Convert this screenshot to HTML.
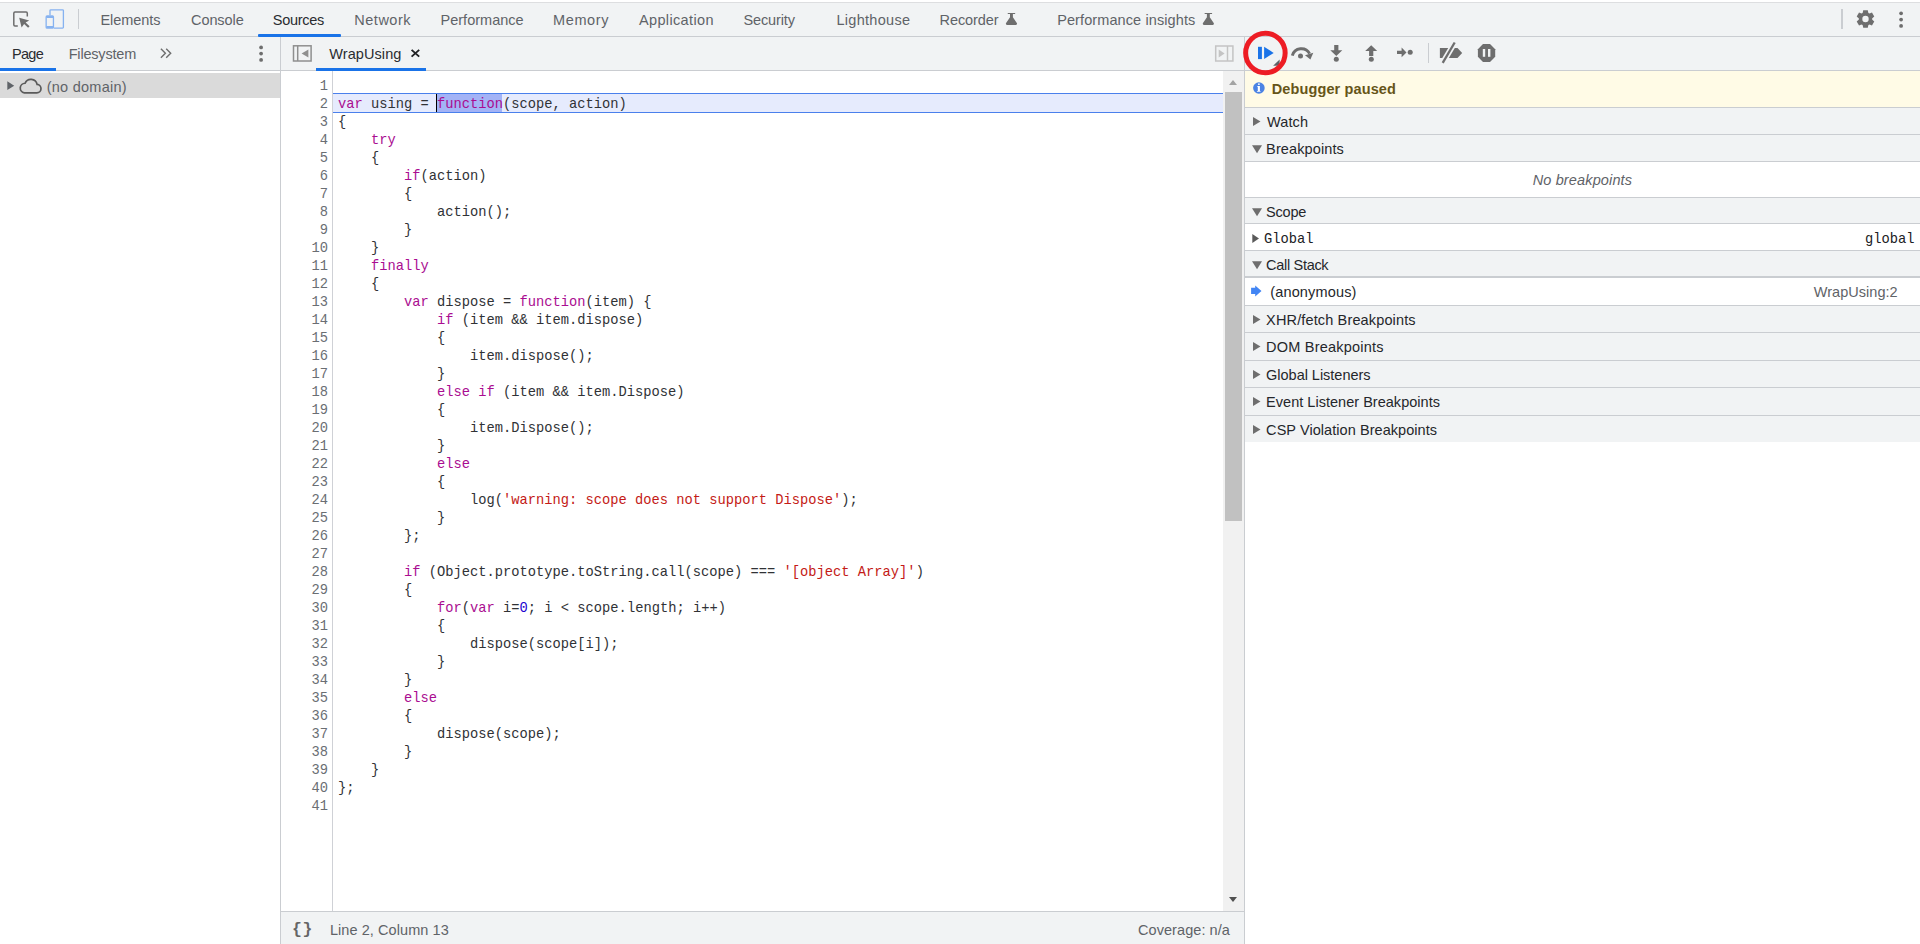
<!DOCTYPE html>
<html lang="en">
<head>
<meta charset="utf-8">
<title>DevTools - Sources</title>
<style>
*{box-sizing:border-box;margin:0;padding:0}
html,body{width:1920px;height:944px;overflow:hidden;background:#fff}
body{position:relative;font-family:"Liberation Sans",sans-serif;font-size:14.5px;color:#5f6368}
.abs{position:absolute}
svg{position:absolute;overflow:visible}
.t{position:absolute;white-space:nowrap;line-height:20px;height:20px;margin-top:1px}
.sel{color:#2a2c30}
.dk{color:#25272b}
.vline{position:absolute;width:1px;background:#cacdd1}
.ul{position:absolute;height:3px;background:#1a73e8}
.mono{font-family:"Liberation Mono",monospace;font-size:13.75px}
#code{position:absolute;left:338px;top:78px;font-family:"Liberation Mono",monospace;font-size:13.75px;line-height:18px;color:#303236;white-space:pre}
#nums{position:absolute;left:281px;top:78px;width:47px;text-align:right;font-family:"Liberation Mono",monospace;font-size:13.75px;line-height:18px;color:#6a6e73;white-space:pre}
.k{color:#aa0d91}.s{color:#c41a16}.n{color:#1c00cf}
.sec{position:absolute;left:1245px;width:675px;background:#f1f3f4;border-top:1px solid #cacdd1}
.row{position:absolute;left:1245px;width:675px;background:#fff;border-top:1px solid #cacdd1}
</style>
</head>
<body>
<div class="abs" style="left:0;top:2px;width:1920px;height:35px;background:#f1f3f4;border-top:1px solid #dddee0;border-bottom:1px solid #cacdd1"></div>
<div class="abs" style="left:0;top:37px;width:1920px;height:34px;background:#f1f3f4;border-bottom:1px solid #cacdd1"></div>
<span class="t" id="tb1" style="left:100.50px;top:9px;letter-spacing:-0.077px;">Elements</span>
<span class="t" id="tb2" style="left:191.00px;top:9px;letter-spacing:-0.075px;">Console</span>
<span class="t sel" id="tb3" style="left:272.80px;top:9px;letter-spacing:-0.300px;">Sources</span>
<span class="t" id="tb4" style="left:354.30px;top:9px;letter-spacing:0.510px;">Network</span>
<span class="t" id="tb5" style="left:440.50px;top:9px;letter-spacing:0.018px;">Performance</span>
<span class="t" id="tb6" style="left:553.00px;top:9px;letter-spacing:0.630px;">Memory</span>
<span class="t" id="tb7" style="left:639.00px;top:9px;letter-spacing:0.351px;">Application</span>
<span class="t" id="tb8" style="left:743.40px;top:9px;letter-spacing:-0.116px;">Security</span>
<span class="t" id="tb9" style="left:836.50px;top:9px;letter-spacing:0.280px;">Lighthouse</span>
<span class="t" id="tb10" style="left:939.60px;top:9px;letter-spacing:-0.103px;">Recorder</span>
<span class="t" id="tb11" style="left:1057.20px;top:9px;letter-spacing:0.099px;">Performance insights</span>
<div class="ul" style="left:258.4px;top:34px;width:82.4px;border-radius:1px"></div>
<div class="vline" style="left:78px;top:9px;height:20px"></div>
<div class="vline" style="left:1841px;top:9px;height:20px;width:2px"></div>
<span class="t sel" id="nv1" style="left:11.95px;top:43px;letter-spacing:-0.675px;">Page</span>
<span class="t" id="nv2" style="left:68.70px;top:43px;letter-spacing:-0.190px;">Filesystem</span>
<div class="ul" style="left:0;top:68px;width:56px"></div>
<div class="vline" style="left:280px;top:37px;height:907px"></div>
<div class="abs" style="left:0;top:73px;width:280px;height:25px;background:#dadada"></div>
<span class="t" id="nd" style="left:46.70px;top:76px;letter-spacing:0.252px;">(no domain)</span>
<span class="t sel" id="ft" style="left:329.25px;top:43px;letter-spacing:0.084px;">WrapUsing</span>
<div class="ul" style="left:316px;top:68px;width:110px"></div>
<div class="abs" style="left:332px;top:71px;width:1px;height:840px;background:#cfd1d6"></div>
<div class="abs" style="left:333px;top:93px;width:890px;height:20px;background:#e6ebfd;border-top:1px solid #4a80ec;border-bottom:1px solid #4a80ec"></div>
<div class="abs" style="left:437px;top:94px;width:65px;height:18px;background:#a3b3f6"></div>
<div class="abs" style="left:436px;top:94px;width:1px;height:18px;background:#000"></div>
<pre id="nums"> 1
 2
 3
 4
 5
 6
 7
 8
 9
10
11
12
13
14
15
16
17
18
19
20
21
22
23
24
25
26
27
28
29
30
31
32
33
34
35
36
37
38
39
40
41</pre>
<pre id="code">

<span class="k">var</span> using = <span class="k">function</span>(scope, action)
{
    <span class="k">try</span>
    {
        <span class="k">if</span>(action)
        {
            action();
        }
    }
    <span class="k">finally</span>
    {
        <span class="k">var</span> dispose = <span class="k">function</span>(item) {
            <span class="k">if</span> (item &amp;&amp; item.dispose)
            {
                item.dispose();
            }
            <span class="k">else</span> <span class="k">if</span> (item &amp;&amp; item.Dispose)
            {
                item.Dispose();
            }
            <span class="k">else</span>
            {
                log(<span class="s">'warning: scope does not support Dispose'</span>);
            }
        };

        <span class="k">if</span> (Object.prototype.toString.call(scope) === <span class="s">'[object Array]'</span>)
        {
            <span class="k">for</span>(<span class="k">var</span> i=<span class="n">0</span>; i &lt; scope.length; i++)
            {
                dispose(scope[i]);
            }
        }
        <span class="k">else</span>
        {
            dispose(scope);
        }
    }
};
</pre>

<div class="abs" style="left:1223px;top:71px;width:21px;height:840px;background:#f1f1f1"></div>
<div class="abs" style="left:1225px;top:92px;width:17px;height:429px;background:#c1c1c1"></div>
<div class="abs" style="left:1228.7px;top:80px;width:0;height:0;border-bottom:5.4px solid #a3a3a3;border-left:4.8px solid transparent;border-right:4.8px solid transparent"></div>
<div class="abs" style="left:1228.7px;top:896.7px;width:0;height:0;border-top:5.4px solid #505050;border-left:4.8px solid transparent;border-right:4.8px solid transparent"></div>
<div class="abs" style="left:281px;top:911px;width:963px;height:33px;background:#f1f3f4;border-top:1px solid #cacdd1"></div>
<span class="t" id="st0" style="left:292.00px;top:919px;font-weight:bold;font-size:16.5px;letter-spacing:0.6px;color:#666;font-family:'Liberation Mono',monospace">{}</span>
<span class="t" id="st1" style="left:329.90px;top:919px;letter-spacing:0.073px;">Line 2, Column 13</span>
<span class="t" id="st2" style="left:1138.00px;top:919px;letter-spacing:0.067px;">Coverage: n/a</span>
<div class="vline" style="left:1244px;top:37px;height:907px"></div>
<div class="abs" style="left:1245px;top:71px;width:675px;height:36px;background:#fffbe6"></div>
<span class="t" id="dp" style="left:1271.70px;top:78px;letter-spacing:0.122px;font-weight:bold;color:#665518">Debugger paused</span>
<div class="sec" style="top:107px;height:28px;"></div>
<span class="t dk" id="s1" style="left:1267.10px;top:111px;letter-spacing:0.090px;">Watch</span>
<div class="sec" style="top:134px;height:28px;"></div>
<span class="t dk" id="s2" style="left:1266.10px;top:138px;letter-spacing:0.117px;">Breakpoints</span>
<div class="row" style="top:161px;height:37px;"></div>
<span class="t" id="nb" style="left:1532.70px;top:169px;letter-spacing:0.138px;font-style:italic;color:#5f6368">No breakpoints</span>
<div class="sec" style="top:197px;height:27px;"></div>
<span class="t dk" id="s3" style="left:1266.10px;top:201px;letter-spacing:-0.225px;">Scope</span>
<div class="row" style="top:223px;height:28px;"></div>
<span class="t mono" id="gl" style="left:1264.00px;top:229px;color:#202124">Global</span>
<span class="t mono" id="gr" style="left:1865.00px;top:229px;color:#202124">global</span>
<div class="sec" style="top:250px;height:28px;"></div>
<span class="t dk" id="s4" style="left:1266.10px;top:254px;letter-spacing:-0.310px;">Call Stack</span>
<div class="row" style="top:276px;height:29px;border-top:2px solid #cacdd1"></div>
<span class="t dk" id="an" style="left:1270.20px;top:281px;letter-spacing:0.162px;">(anonymous)</span>
<span class="t" id="wu" style="left:1813.70px;top:281px;letter-spacing:0.045px;">WrapUsing:2</span>
<div class="sec" style="top:305px;height:28px;"></div>
<span class="t dk" id="s5" style="left:1266.10px;top:309px;letter-spacing:0.140px;">XHR/fetch Breakpoints</span>
<div class="sec" style="top:332px;height:28px;"></div>
<span class="t dk" id="s6" style="left:1266.10px;top:336px;letter-spacing:0.219px;">DOM Breakpoints</span>
<div class="sec" style="top:360px;height:28px;"></div>
<span class="t dk" id="s7" style="left:1266.10px;top:364px;letter-spacing:-0.024px;">Global Listeners</span>
<div class="sec" style="top:387px;height:28px;"></div>
<span class="t dk" id="s8" style="left:1266.10px;top:391px;letter-spacing:0.022px;">Event Listener Breakpoints</span>
<div class="sec" style="top:415px;height:27px;"></div>
<span class="t dk" id="s9" style="left:1266.10px;top:419px;letter-spacing:0.060px;">CSP Violation Breakpoints</span>
<svg style="left:0;top:0" width="1920" height="120" viewBox="0 0 1920 120">
<!-- inspect -->
<path d="M17.8 26H15a1.2 1.2 0 0 1-1.2-1.2V13.3a1.2 1.2 0 0 1 1.2-1.2H26.1a1.2 1.2 0 0 1 1.2 1.2V16.4" fill="none" stroke="#6e6e6e" stroke-width="1.5"/>
<path d="M19.2 17.7L29.2 20.5 25.6 22.4 29.6 26.3 28.1 27.8 24.1 23.9 21.6 27.6Z" fill="#6e6e6e"/>
<!-- device -->
<g fill="none" stroke="#86b2f0">
<path d="M50 15.3V10.6a.8 .8 0 0 1 .8-.8H62.6a.8 .8 0 0 1 .8 .8V27.3a.8 .8 0 0 1-.8 .8H54" stroke-width="1.3"/>
<rect x="46.15" y="16" width="7.3" height="12.1" rx="0.9" stroke-width="1.3"/>
<path d="M46.4 16.9H53.2M46.4 27.1H53.2" stroke-width="2"/>
</g>
<!-- flasks -->
<g fill="#6e6e6e">
<path id="flk" d="M1008 13h6.9a.45.45 0 0 1 0 .9h-2v3.4l3.9 5.7a1.2 1.2 0 0 1-1 1.9h-8.7a1.2 1.2 0 0 1-1-1.9l3.9-5.7v-3.4h-2a.45.45 0 0 1 0-.9z"/>
<use href="#flk" x="196.9"/>
</g>
<!-- gear -->
<g transform="translate(1865.5 19)" fill="#6e6e6e">
<circle r="4.95" fill="none" stroke="#6e6e6e" stroke-width="3.5"/>
<path id="tooth" d="M-2.9 -5.6L-2.3 -8.8H2.3L2.9 -5.6Z"/>
<use href="#tooth" transform="rotate(60)"/><use href="#tooth" transform="rotate(120)"/><use href="#tooth" transform="rotate(180)"/><use href="#tooth" transform="rotate(240)"/><use href="#tooth" transform="rotate(300)"/>
</g>
<!-- kebab -->
<g fill="#6e6e6e"><circle cx="1901.1" cy="13.3" r="1.9"/><circle cx="1901.1" cy="19.6" r="1.9"/><circle cx="1901.1" cy="25.9" r="1.9"/>
<circle cx="261.1" cy="47.4" r="1.9"/><circle cx="261.1" cy="53.6" r="1.9"/><circle cx="261.1" cy="59.9" r="1.9"/></g>
<!-- chevrons -->
<path d="M160.9 48.8L165.4 53.3 160.9 57.8M166.2 48.8L170.7 53.3 166.2 57.8" fill="none" stroke="#6e6e6e" stroke-width="1.4"/>
<!-- toggle navigator -->
<g stroke="#8f8f8f" fill="none" stroke-width="1.5"><rect x="293.5" y="45.8" width="17.6" height="15.2"/><path d="M297.7 45.8V61"/></g>
<path d="M301.6 53.5L308.4 49.6V57.4Z" fill="#8f8f8f"/>
<!-- close x -->
<path d="M411.6 49.9L419.2 56.6M419.2 49.9L411.6 56.6" stroke="#202124" stroke-width="1.9" fill="none"/>
<!-- toggle debugger -->
<g stroke="#c4c4c4" fill="none" stroke-width="1.5"><rect x="1215.7" y="46" width="17.2" height="15"/><path d="M1227.5 46V61"/></g>
<path d="M1224.6 53.5L1218.7 49.6V57.4Z" fill="#c4c4c4"/>
<!-- cloud -->
<path d="M24.3 92.8H36.8A4.2 4.2 0 0 0 37.09 84.41A6.3 6.3 0 0 0 25.05 83.26A4.8 4.8 0 0 0 24.3 92.8Z" fill="none" stroke="#5a5a5a" stroke-width="1.7"/>
<path d="M7.3 81.3L14.2 85.7 7.3 90.1Z" fill="#5f6368"/>
</svg>

<svg style="left:0;top:0" width="1920" height="460" viewBox="0 0 1920 460">
<!-- resume -->
<rect x="1258" y="46.8" width="3.9" height="12.3" fill="#1a73e8"/>
<path d="M1264.1 46.8L1273.7 52.95 1264.1 59.1Z" fill="#1a73e8"/>
<path d="M1279.6 59.4V65.8H1273.1Z" fill="#5f6368"/>
<circle cx="1265.4" cy="53" r="19.75" fill="none" stroke="#ed1c24" stroke-width="5"/>
<g fill="#6e6e6e">
<!-- step over -->
<path d="M1292.3 55.6A9.4 9.4 0 0 1 1309.6 53.6" fill="none" stroke="#6e6e6e" stroke-width="2.9"/>
<path d="M1305 55.3L1313.3 52.8 1310.4 59.6Z"/>
<circle cx="1300.5" cy="55.9" r="2.5"/>
<!-- step into -->
<path d="M1334.2 44.9h4.2v5.3h3.9l-6 5.7-6-5.7h3.9z"/>
<circle cx="1336.3" cy="59.2" r="2.5"/>
<!-- step out -->
<path d="M1371.2 45.3l6 5.7h-3.9v4.9h-4.2v-4.9h-3.9z"/>
<circle cx="1371.3" cy="59.3" r="2.5"/>
<!-- step -->
<path d="M1397 50.8h4.6v-3.3l4.9 4.9-4.9 4.9v-3.3h-4.6z"/>
<circle cx="1410.2" cy="52.2" r="2.5"/>
<!-- deactivate -->
<path d="M1439.9 48.1H1457.5L1462.2 53 1457.5 57.9H1439.9Z"/>
<path d="M1455.5 41.2L1442 64" stroke="#f1f3f4" stroke-width="5.6" fill="none"/>
<path d="M1454.7 42.5L1442.7 62.8" stroke="#6e6e6e" stroke-width="2.3" fill="none"/>
<!-- pause on exc -->
<path d="M1483 44.1h7l5.2 5.2v7.4l-5.2 5.2h-7l-5.1-5.2v-7.4z"/>
<rect x="1482.8" y="49" width="2.4" height="7.8" fill="#f1f3f4"/><rect x="1488" y="49" width="2.4" height="7.8" fill="#f1f3f4"/>
</g>
<rect x="1428" y="43" width="1" height="20" fill="#cacdd1"/>
<!-- info -->
<circle cx="1258.9" cy="88" r="5.8" fill="#4b83e4"/>
<circle cx="1258.9" cy="84.2" r="0.85" fill="#fff"/>
<path d="M1257.2 85.9h2.7v5h.6v.8h-3.6v-.8h.9v-4.2h-.6z" fill="#fff"/>
<!-- section triangles -->
<g fill="#6e6e6e">
<path id="tr" d="M1253 117L1260.5 121.5 1253 126Z"/>
<use href="#tr" y="198"/><use href="#tr" y="225"/><use href="#tr" y="253"/><use href="#tr" y="280"/><use href="#tr" y="308"/>
<path id="td" d="M1252 145.2H1262L1257 153.2Z"/>
<use href="#td" y="63"/><use href="#td" y="116"/>
</g>
<path d="M1252.3 234L1259 238.45 1252.3 242.9Z" fill="#5a5a5a"/>
<!-- call frame arrow -->
<path d="M1251.1 287.8h4.1v-2.4l6.3 5.5-6.3 5.6v-2.5h-4.1z" fill="#4285f4"/>
</svg>

</body>
</html>
